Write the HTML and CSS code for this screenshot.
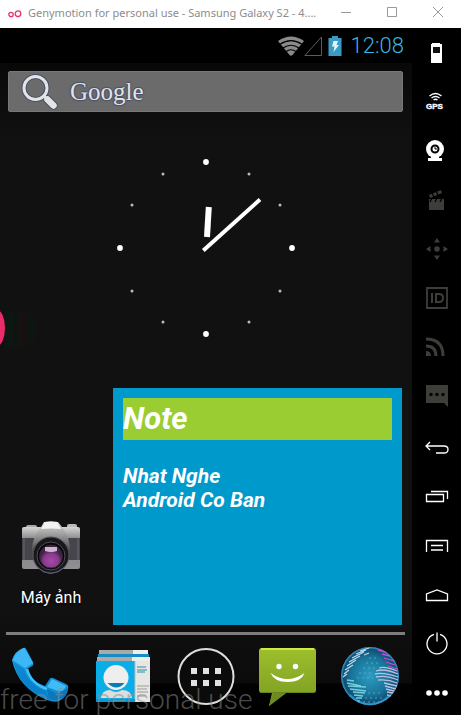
FILE: index.html
```html
<!DOCTYPE html>
<html lang="vi">
<head>
<meta charset="utf-8">
<meta name="viewport" content="width=device-width, initial-scale=1">
<title>Genymotion</title>
<link rel="stylesheet" href="styles.css">
</head>
<body>
<div class="window">
  <header class="titlebar">
    <svg class="logo" viewBox="0 0 14 10" fill="none" stroke="#e8336d" stroke-width="1.3"><circle cx="3" cy="5.500" r="2.200"/><circle cx="10" cy="4.700" r="2.800"/></svg>
    <h1 class="title">Genymotion for personal use - Samsung Galaxy S2 - 4....</h1>
    <button class="winbtn" aria-label="Minimize"><svg viewBox="0 0 12 12"><path d="M1 6.500h10"/></svg></button>
    <button class="winbtn" aria-label="Maximize"><svg viewBox="0 0 12 12"><path d="M1.500 1.500h9v9h-9z"/></svg></button>
    <button class="winbtn" aria-label="Close"><svg viewBox="0 0 12 12"><path d="M1 1l10 10M11 1L1 11"/></svg></button>
  </header>
  <div class="body">
    <main class="screen">
      <div class="status">
        <svg class="wifi" viewBox="0 0 26 20"><path d="M0 5Q13-4 26 5L14.500 19q-1.500 1.500-3 0z" fill="#8a8a8a"/><path d="M2 8.300Q13 1 24 8.300M5 12Q13 6.500 21 12M8 15.500Q13 12 18 15.500" fill="none" stroke="#000" stroke-width="1.200"/></svg>
        <svg class="signal" viewBox="0 0 18 20" fill="none" stroke="#5c5c5c"><path d="M.9 19.500L17.500 1v18.500z"/></svg>
        <svg class="battery" viewBox="0 0 14 20"><path d="M4 0h6v2h3.500v18H.5V2H4z" fill="#3a9cc4"/><path d="M5.500 5h4.500L8.500 9H11l-5.500 7 1-5.500H4z" fill="#e4f5fb"/></svg>
        <time class="time">12:08</time>
      </div>
      <button class="search" aria-label="Google">
        <svg class="lens" viewBox="0 0 38 38"><g fill="none" stroke="#48516a"><circle cx="14.500" cy="15" r="11.500" stroke-width="5"/><path d="M23 23l3 3" stroke-width="6"/><path d="M26.500 26.500l6 6" stroke-width="8.500" stroke-linecap="round"/></g><g fill="none" stroke="#e4e4e4"><circle cx="14.500" cy="15" r="11.500" stroke-width="3"/><path d="M22 22l5 5" stroke-width="3"/><path d="M26.500 26.500l6 6" stroke-width="6.500" stroke-linecap="round"/></g></svg>
        <span class="brand">Google</span>
      </button>
      <svg class="clock" viewBox="0 0 190 190" fill="#fff" role="img" aria-label="12:08">
        <circle cx="95" cy="9" r="2.900"/><circle cx="181" cy="95" r="2.900"/><circle cx="95" cy="181" r="2.900"/><circle cx="9" cy="95" r="2.900"/>
        <g fill="#bbb"><circle cx="138" cy="21" r="1.500"/><circle cx="169" cy="52" r="1.500"/><circle cx="169" cy="138" r="1.500"/><circle cx="138" cy="169" r="1.500"/><circle cx="52" cy="169" r="1.500"/><circle cx="21" cy="138" r="1.500"/><circle cx="21" cy="52" r="1.500"/><circle cx="52" cy="21" r="1.500"/></g>
        <path d="M97.800 54L96 84" stroke="#fff" stroke-width="6"/><path d="M92.300 97.500L149 46.500" stroke="#fff" stroke-width="4"/>
      </svg>
      <div class="widgets">
        <button class="app">
          <svg class="camera" viewBox="0 0 60 54">
            <defs><linearGradient id="metal" x2="0" y2="1"><stop stop-color="#d5d5d5"/><stop offset=".3" stop-color="#858585"/><stop offset="1" stop-color="#8f8f92"/></linearGradient><linearGradient id="prism" x2="0" y2="1"><stop stop-color="#ddd"/><stop offset=".3" stop-color="#9a9a9a"/><stop offset=".6" stop-color="#555"/><stop offset="1" stop-color="#333"/></linearGradient><radialGradient id="glass" cy=".7"><stop stop-color="#a34aa5"/><stop offset=".65" stop-color="#8b3a8f"/><stop offset="1" stop-color="#45204a"/></radialGradient></defs>
            <rect x="5" y="4" width="11" height="5" rx="2" fill="#aaa"/><rect x="46" y="3" width="10" height="5" rx="2" fill="#bbb"/>
            <rect x="1" y="6" width="58" height="42" rx="2" fill="url(#metal)"/><path d="M1 17h58v22H1z" fill="#45454b"/><path d="M3 17v22M57 17v22" stroke="#686870"/>
            <path d="M20 6l3-5q7-1 14 0l4 5q8 11 8 22 0 14-19 18Q11 42 11 28q0-10 9-22z" fill="url(#prism)"/><path d="M20 8l4-7q6-1 12 0l4 7q-10-1-20 0z" fill="#f2f2f2"/>
            <circle cx="30" cy="34" r="18" fill="#18181a" stroke="#55555d"/><circle cx="30" cy="35" r="14" fill="#050507" stroke="#505057"/><circle cx="30" cy="35.500" r="11.500" fill="url(#glass)" stroke="#302b34"/><path d="M24 26h12v4q-6 2-12 0z" fill="#eadfeb" opacity=".8"/><path d="M15 45q14 15 30 0" fill="none" stroke="#5b5b88"/>
          </svg>
          <span class="label">Máy ảnh</span>
        </button>
        <article class="note">
          <h2 class="note-title">Note</h2>
          <p class="note-text">Nhat Nghe<br>Android Co Ban</p>
        </article>
      </div>
      <nav class="dock">
        <button class="dockbtn" aria-label="Phone"><svg viewBox="0 0 62 62">
          <defs><linearGradient id="phone" x2="1" y2="1"><stop stop-color="#2fb2f5"/><stop offset=".5" stop-color="#0a8cd6"/><stop offset="1" stop-color="#1590d0"/></linearGradient></defs>
          <path d="M2 14Q5 5 13 2q2-1 3 1l7 13q1 3-1 4l-5 3q3 12 18 17l4-6q1-3 4-2l13 6q3 1 2 5-1 8-9 12-4 2-12-1Q8 42 2 14z" fill="url(#phone)"/>
          <path d="M14 2l9 15-8 5L3 14Q7 5 14 2z" fill="#3db8f7"/><path d="M3 15l11 8q4 16 22 22l3 8Q9 42 3 15z" fill="#0779bf" opacity=".6"/>
          <path d="M17 23q4 15 20 20" fill="none" stroke="#3fc0fb" stroke-width="2.500"/><path d="M42 33l14 7q-2 6-8 5l-11-4z" fill="#41bbf5"/><path d="M37 43l11 5 10-6q0 8-8 11-4 2-11 0z" fill="#0869a8" opacity=".6"/>
        </svg></button>
        <button class="dockbtn" aria-label="Contacts"><svg viewBox="0 0 62 62">
          <path d="M7 4h49v4H7z" fill="#aaa"/><path d="M41 4h15v4H41z" fill="#eee"/><path d="M6 8h51v3H6z" fill="#168cc4"/><path d="M5 11h53v5H5z" fill="#b1a9a4"/><path d="M40 11h18v5H40z" fill="#eee"/>
          <path d="M4 15h39v41H4z" fill="#09aee9"/><path d="M43 15h15v41H43z" fill="#e6e6e3"/><path d="M43 15v41" stroke="#bbb"/>
          <circle cx="24" cy="31.500" r="12.500" fill="#eee"/><path d="M15.500 37h17q-8 9-17 0z" fill="#087db5"/><path d="M9 52q1-8 9-8 6 4 12 0 9 0 10 8z" fill="#ddd"/><path d="M4 53h39v3H4z" fill="#049bd5"/>
          <path d="M45 21h9M45 24h10M45 26h8" stroke="#238fae"/><path d="M45 40h12M45 43h10M45 46h11M45 50h9" stroke="#999"/>
        </svg></button>
        <button class="dockbtn" aria-label="Apps"><svg viewBox="0 0 62 62"><circle cx="31" cy="30.500" r="27.500" fill="#0b0b0b" stroke="#ddd" stroke-width="2"/><path d="M16 22h6v6h-6zM28 22h6v6h-6zM40 22h6v6h-6zM16 34h6v6h-6zM28 34h6v6h-6zM40 34h6v6h-6z" fill="#e2e2e2"/></svg></button>
        <button class="dockbtn" aria-label="Messages"><svg viewBox="0 0 62 62">
          <defs><linearGradient id="sms" x2="0" y2="1"><stop stop-color="#9dbf2c"/><stop offset="1" stop-color="#7b9b22"/></linearGradient></defs>
          <path d="M5 2h51q3 0 3 3v39q0 3-3 3H29L12 60l3-13H5q-3 0-3-3V5q0-3 3-3z" fill="url(#sms)"/><path d="M4 3h53" stroke="#d0ea43" stroke-width="2"/><path d="M16 47h13L12 60z" fill="#6c8a1e"/><path d="M4 46.500h53" stroke="#66851d"/>
          <circle cx="22" cy="20.500" r="2.700" fill="#fff"/><circle cx="38.500" cy="20.500" r="2.700" fill="#fff"/><path d="M13.500 27q17 12 34 0-3 9-17 9-13 0-17-9z" fill="#fff"/>
        </svg></button>
        <button class="dockbtn" aria-label="Browser"><svg viewBox="0 0 62 62">
          <defs><radialGradient id="globe"><stop stop-color="#2c9dc0"/><stop offset=".65" stop-color="#1a7499"/><stop offset=".92" stop-color="#114e74"/><stop offset="1" stop-color="#3ba9de"/></radialGradient><clipPath id="disc"><circle cx="31" cy="30" r="29"/></clipPath></defs>
          <circle cx="31" cy="30" r="29" fill="url(#globe)"/>
          <g clip-path="url(#disc)" fill="none" stroke-width="1.300">
            <path d="M21 5l9-3M17 8l10-4M13 12l12-6M10 16l11-6M8 20l9-6M6 24l8-5M5 28l5-4M4 31l4-3M25 9l5-2" stroke="#bad9eb"/>
            <path d="M8 34l7 1M8 37l14 3M9 40l18 1M11 43l16 2M14 46l12 1M15 49l9 1M17 52l6 0M18 55l3 0" stroke="#74cfdc"/>
            <path d="M39 4l8 2M43 8l8 2M45 12l10 3M47 16l9 3M49 20l9 3" stroke="#c54ed2"/>
            <path d="M40 22q6-2 18 3M37 25q8-3 22 3M36 28q8-2 23 3M37 31q10-2 22 3M39 34q10-1 19 3M45 37l13 3M46 40l11 3M47 43l8 2M48 46l6 1M48 49l4 1" stroke="#b8bfe3"/>
            <path d="M30 12h10M27 17h14M24 22h12M20 27h14M18 32h16M29 47h14M26 52h20M24 56h17" stroke="#4fbce0" stroke-dasharray="2 3" opacity=".5"/>
          </g><path d="M11 49q20 19 40 0" fill="none" stroke="#37aee7" stroke-width="2" opacity=".5"/>
        </svg></button>
      </nav>
      <svg class="edge" viewBox="0 0 40 44"><path d="M5 3h10v37H5zM17 5h5v35h-5z" fill="#06200e" opacity=".35"/><path d="M20 4h6v36h-6z" fill="#380913" opacity=".2"/><path d="M28 8h7v26h-7z" fill="#082010" opacity=".3"/><ellipse cx="-3" cy="20" rx="8" ry="18" fill="#e92c6c"/></svg>
      <p class="watermark">free for personal use</p>
    </main>
    <aside class="tools">
      <div class="toolgroup">
        <button aria-label="Battery"><svg viewBox="0 0 24 24"><path d="M7 2h8v1h2v19H6V3h1z" fill="#fff"/><path d="M8 6h7v6H8z" fill="#111"/></svg></button>
        <button aria-label="GPS"><svg viewBox="0 0 24 24"><g fill="none" stroke="#fff" stroke-width="1.400"><path d="M4.500 6q6-5 12 0M6.500 8q4-3 8 0M8.500 10q2-1.500 4 0"/></g><text x="1" y="19" class="gps">GPS</text></svg></button>
        <button aria-label="Camera"><svg viewBox="0 0 24 24"><circle cx="10" cy="10" r="9" fill="#fff"/><path d="M6 17h8v2h3v3H3v-3h3z" fill="#fff"/><circle cx="10" cy="10" r="3.500" fill="none" stroke="#000" stroke-width="2"/><path d="M10 8v2h2" stroke="#000" fill="none"/></svg></button>
        <button aria-label="Capture"><svg viewBox="0 0 24 24" fill="#3d3d3a"><path d="M4 11h15v11H4zM4 7l12-5 1 3-12 5z"/><path d="M7 10l-2 4M12 10l-2 4M17 10l-2 4M7 5l2 4M11 3l2 4" stroke="#000" stroke-width="1.300"/></svg></button>
        <button aria-label="Move"><svg viewBox="0 0 24 24" fill="#3d3d3a"><circle cx="12" cy="12" r="2.700"/><path d="M12 1l3 4.500H9zM12 23l-3-4.500h6zM1 12l4.500-3v6zM23 12l-4.500 3V9z"/></svg></button>
        <button aria-label="Identifiers"><svg viewBox="0 0 24 24" fill="none" stroke="#3d3d3a"><path d="M2 2h20v20H2z" stroke-width="1.800"/><path d="M7 7v10M11 8h3q4 0 4 4t-4 4h-3z" stroke-width="2"/></svg></button>
        <button aria-label="Network"><svg viewBox="0 0 24 24" fill="none" stroke="#3d3d3a" stroke-width="3"><path d="M1 4q17 0 17 17M1 11q10 0 10 10"/><path d="M1 16q5 0 5 5H1z" fill="#3d3d3a" stroke="none"/></svg></button>
        <button aria-label="Phone messages"><svg viewBox="0 0 24 24"><path d="M1 1h22v22l-4-4H1z" fill="#3d3d3a"/><g fill="#000"><circle cx="6" cy="10.500" r="1.700"/><circle cx="12" cy="10.500" r="1.700"/><circle cx="18" cy="10.500" r="1.700"/></g></svg></button>
      </div>
      <div class="toolgroup">
        <button aria-label="Back"><svg viewBox="0 0 24 24" class="line"><path d="M5 6L1 10l4 4M1 10h18q4 0 4 3.500t-4 3.500h-8"/></svg></button>
        <button aria-label="Recent apps"><svg viewBox="0 0 24 24" class="line"><path d="M1.500 9.500h17v7h-17zM6 6.500h16.500V14"/></svg></button>
        <button aria-label="Menu"><svg viewBox="0 0 24 24" class="line"><path d="M1.500 18V6.500h21V18M6 11.500h12M6 16h12"/></svg></button>
        <button aria-label="Home"><svg viewBox="0 0 24 24" class="line"><path d="M1.500 17.500V11L12 7l10.500 4v6.500z"/></svg></button>
        <button aria-label="Power"><svg viewBox="0 0 24 24" class="line"><path d="M9 2.300a10 10 0 1 0 6 0M12 .5v9"/></svg></button>
        <button aria-label="More"><svg viewBox="0 0 24 24" fill="#fff"><circle cx="4" cy="12" r="2.800"/><circle cx="12" cy="12" r="2.800"/><circle cx="20" cy="12" r="2.800"/></svg></button>
      </div>
    </aside>
  </div>
</div>
</body>
</html>
```
FILE: styles.css
```css
* { box-sizing: border-box; margin: 0; padding: 0; }
body { background: #000; font-family: Roboto, sans-serif; }
button { border: 0; background: none; color: inherit; font: inherit; cursor: pointer; }
svg { display: block; flex: none; }
.window { min-height: 100vh; display: flex; flex-direction: column; }
.titlebar { height: 28px; display: flex; align-items: center; background: #fff; padding-left: 8px; }
.logo { width: 14px; height: 10px; margin-right: 6px; }
.title { flex: 1; min-width: 0; overflow: hidden; white-space: nowrap; font: 400 11px/24px "Noto Sans", sans-serif; color: #8c8c8c; padding-bottom: 2px; }
.winbtn { flex: none; width: 46px; height: 28px; display: flex; align-items: center; justify-content: center; padding-bottom: 4px; }
.winbtn svg { width: 12px; height: 12px; fill: none; stroke: #999; }
.body { flex: 1; display: flex; }
.screen { flex: 1; min-width: 0; position: relative; display: flex; flex-direction: column; background: linear-gradient(#080808 35px, #111 110px, #111 580px, #0b0b0b 655px, #020202 656px, #000); overflow: hidden; }
.status { height: 35px; background: #000; display: flex; align-items: center; justify-content: flex-end; padding-right: 8px; }
.wifi { width: 26px; height: 20px; }
.signal { width: 18px; height: 20px; }
.battery { width: 14px; height: 20px; margin: 0 9px 0 6px; }
.time { font-size: 22px; font-weight: 300; color: #33b5e5; line-height: 35px; }
.search { height: 41px; margin: 8px 9px 0 8px; padding-left: 12px; display: flex; align-items: center; gap: 11px; background: #6b6b6b; border: 1px solid #777; border-radius: 2px; }
.lens { width: 38px; height: 38px; }
.brand { font: 400 25px/32px "Liberation Serif", serif; color: #e2e2e2; text-shadow: 1px 0 1px #48516a, -1px 0 1px #48516a, 0 1px 1px #48516a, 0 -1px 1px #48516a; }
.clock { width: 190px; height: 190px; margin: 41px auto 45px; }
.widgets { height: 237px; display: flex; margin-right: 10px; }
.app { width: 102px; display: flex; flex-direction: column; align-items: center; justify-content: flex-end; gap: 13px; padding-bottom: 17px; color: #fff; }
.camera { width: 60px; height: 54px; }
.label { font-size: 16px; line-height: 20px; text-shadow: 0 1px 2px #000; }
.note { flex: 1; margin-left: 11px; padding: 10px; background: #0099cc; color: #fff; font-style: italic; font-weight: 700; }
.note-title { background: #9acd32; font-size: 31px; line-height: 42px; font-weight: 700; }
.note-text { margin-top: 24px; font-size: 21px; line-height: 24px; }
.dock { margin: 7px 7px 0 6px; padding: 11px 4px 0; border-top: 3px solid #7d7d7d; display: flex; justify-content: space-between; }
.dockbtn svg { width: 62px; height: 62px; }
.edge { position: absolute; left: 0; top: 280px; width: 40px; height: 44px; }
.watermark { position: absolute; left: 0; bottom: 0; font-size: 28px; line-height: 30px; font-weight: 300; color: rgba(140, 140, 140, .55); white-space: nowrap; pointer-events: none; }
.tools { width: 49px; padding-top: 4px; display: flex; flex-direction: column; gap: 11px; background: #000; }
.toolgroup { display: flex; flex-direction: column; gap: 8px; }
.toolgroup button { height: 41px; display: flex; align-items: center; justify-content: center; }
.toolgroup svg { width: 24px; height: 24px; }
.line { fill: none; stroke: #fff; stroke-width: 1.3; }
.gps { font: 700 8px "Liberation Sans", sans-serif; fill: #fff; stroke: #fff; stroke-width: .4; }
```
